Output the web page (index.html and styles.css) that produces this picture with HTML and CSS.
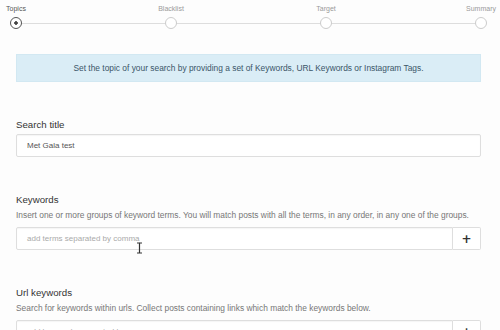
FILE: index.html
```html
<!DOCTYPE html>
<html lang="en">
	<head>
		<meta charset="utf-8">
		<title>New Search - Topics</title>
		<link rel="stylesheet" href="styles.css">
	</head>
	<body>

		<div class="stepper">
			<div class="step active">
				<div class="step-label">Topics</div>
				<div class="step-dot"></div>
			</div>
			<div class="step">
				<div class="step-label">Blacklist</div>
				<div class="step-dot"></div>
			</div>
			<div class="step">
				<div class="step-label">Target</div>
				<div class="step-dot"></div>
			</div>
			<div class="step">
				<div class="step-label">Summary</div>
				<div class="step-dot"></div>
			</div>
		</div>

		<div class="content">

			<div class="info">Set the topic of your search by providing a set of Keywords, URL Keywords or Instagram Tags.</div>

			<div class="field">
				<label class="field-label">Search title</label>
				<div class="input">Met Gala test</div>
			</div>

			<div class="field">
				<label class="field-label">Keywords</label>
				<p class="field-help">Insert one or more groups of keyword terms. You will match posts with all the terms, in any order, in any one of the groups.</p>
				<div class="input-group">
					<div class="input placeholder">add terms separated by comma</div>
					<button class="add-btn">+</button>
					<svg class="text-cursor" width="7" height="12" viewBox="0 0 7 12">
						<path d="M1 1h2l.5.5.5-.5h2M3.5 1.5v9M1 11h2l.5-.5.5.5h2" fill="none" stroke="#333" stroke-width="1.2"/>
					</svg>
				</div>
			</div>

			<div class="field">
				<label class="field-label">Url keywords</label>
				<p class="field-help">Search for keywords within urls. Collect posts containing links which match the keywords below.</p>
				<div class="input-group">
					<div class="input placeholder">add keywords separated by comma</div>
					<button class="add-btn">+</button>
				</div>
			</div>

		</div>

	</body>
</html>
```

FILE: styles.css
```css
html, body {
	margin: 0;
	background: #fdfdfd;
	font-family: "Liberation Sans", Arial, sans-serif;
	color: #333333;
	overflow: hidden;
}

.stepper {
	position: relative;
	display: flex;
	justify-content: space-between;
	margin: 4px 13px 0 10px;
}

.stepper::before {
	content: "";
	position: absolute;
	left: 6px;
	right: 6px;
	top: 19px;
	height: 1px;
	background: #dddddd;
}

.step {
	position: relative;
	width: 12px;
	display: flex;
	flex-direction: column;
	align-items: center;
}

.step-label {
	white-space: nowrap;
	font-size: 7px;
	line-height: 9px;
	color: #9a9a9a;
}

.step-dot {
	box-sizing: border-box;
	width: 12px;
	height: 12px;
	margin-top: 4px;
	border: 1px solid #cccccc;
	border-radius: 50%;
	background: #ffffff;
}

.step.active .step-label {
	color: #555555;
}

.step.active .step-dot {
	border-color: #555555;
	background: radial-gradient(circle, #444444 0 1.5px, #ffffff 2px);
}

.content {
	padding: 0 19px 0 16px;
}

.info {
	margin-top: 25px;
	padding: 8px 10px;
	background: #daedf6;
	border: 1px solid #d2e8f2;
	color: #3b5568;
	font-size: 8.4px;
	line-height: 10px;
	text-align: center;
}

.field {
	margin-top: 37px;
}

.field-label {
	display: block;
	font-size: 9.7px;
	line-height: 12px;
	color: #333333;
}

.field-help {
	margin: 4px 0 0;
	font-size: 8.4px;
	line-height: 11px;
	color: #777777;
}

.input {
	box-sizing: border-box;
	height: 23px;
	margin-top: 3px;
	padding: 0 10px;
	border: 1px solid #dedede;
	border-radius: 2px;
	background: #ffffff;
	box-shadow: inset 0 1px 1px rgba(0, 0, 0, 0.04);
	font-size: 8px;
	line-height: 21px;
	color: #555555;
}

.input.placeholder {
	color: #aaaaaa;
}

.input-group {
	position: relative;
	display: flex;
	margin-top: 6px;
}

.input-group .input {
	flex: 1;
	margin-top: 0;
	border-radius: 2px 0 0 2px;
}

.add-btn {
	box-sizing: border-box;
	width: 28px;
	height: 23px;
	padding: 0;
	border: 1px solid #dedede;
	border-left: 0;
	border-radius: 0 2px 2px 0;
	background: #ffffff;
	font-family: "DejaVu Sans", sans-serif;
	font-size: 12px;
	font-weight: bold;
	color: #333333;
}

/* mouse pointer captured in the screenshot */
.text-cursor {
	position: absolute;
	left: 120px;
	top: 15px;
}
```
